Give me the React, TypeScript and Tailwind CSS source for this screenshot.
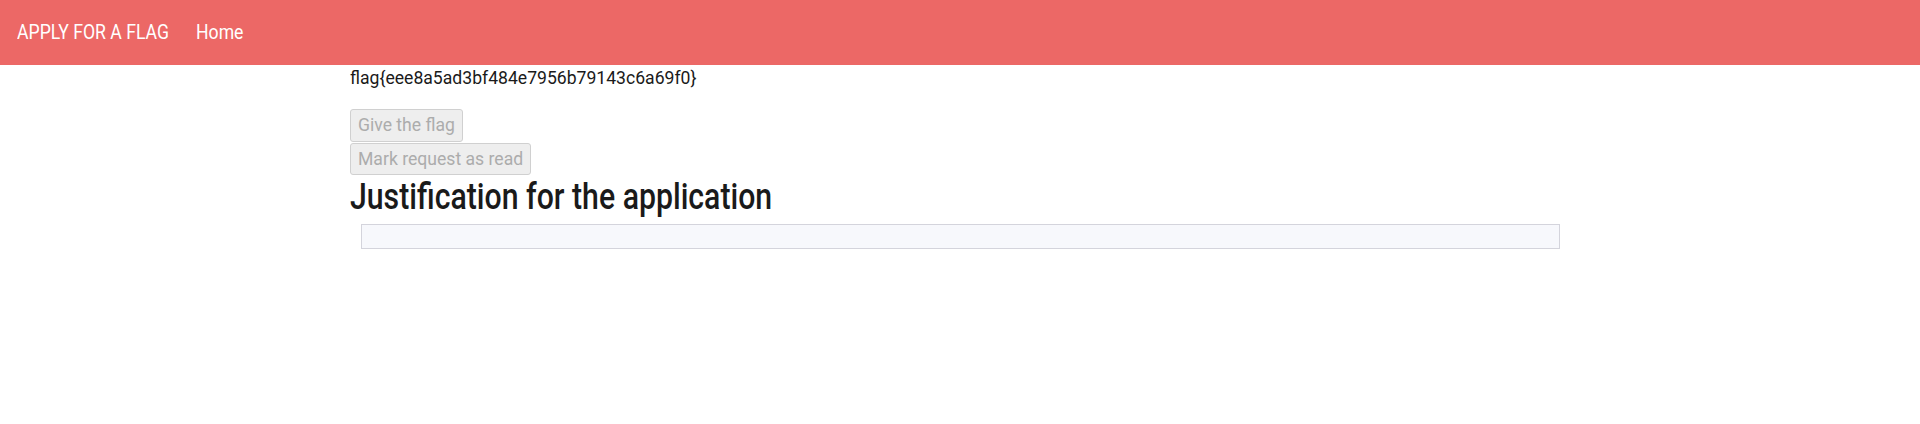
export default function App() {
  return (
    <div className="min-h-screen bg-white text-[#1a1a1a] font-['Roboto','Liberation_Sans',sans-serif]">
      <nav className="flex h-[65px] items-center bg-[#ec6866] px-[17px] text-white">
        <span className="w-[179px] whitespace-nowrap text-[21px] leading-none">
          <span className="inline-block origin-left scale-x-[0.84]">APPLY FOR A FLAG</span>
        </span>
        <span className="whitespace-nowrap text-[21px] leading-none">
          <span className="inline-block origin-left scale-x-[0.84]">Home</span>
        </span>
      </nav>
      <main className="mx-auto w-[1220px]">
        <p className="mt-[2px] text-[17.6px] leading-[22px]">flag{"{"}eee8a5ad3bf484e7956b79143c6a69f0{"}"}</p>
        <div className="mt-[20px] flex flex-col items-start gap-px">
          <button disabled className="h-[33px] rounded-[3px] border border-[#d0d0d0] bg-[#eeeeee] px-[7px] text-[17.6px] text-[#acacac]">
            Give the flag
          </button>
          <button disabled className="h-[32px] rounded-[3px] border border-[#d0d0d0] bg-[#eeeeee] px-[7px] text-[17.6px] text-[#acacac]">
            Mark request as read
          </button>
        </div>
        <h1 className="whitespace-nowrap text-[36px] font-medium leading-[44px]">
          <span className="inline-block origin-left scale-x-[0.84]">Justification for the application</span>
        </h1>
        <div className="ml-[11px] mt-[5px] h-[25px] w-[1199px] border border-[#d4d4dc] bg-[#f7f8fc]" />
      </main>
    </div>
  );
}
